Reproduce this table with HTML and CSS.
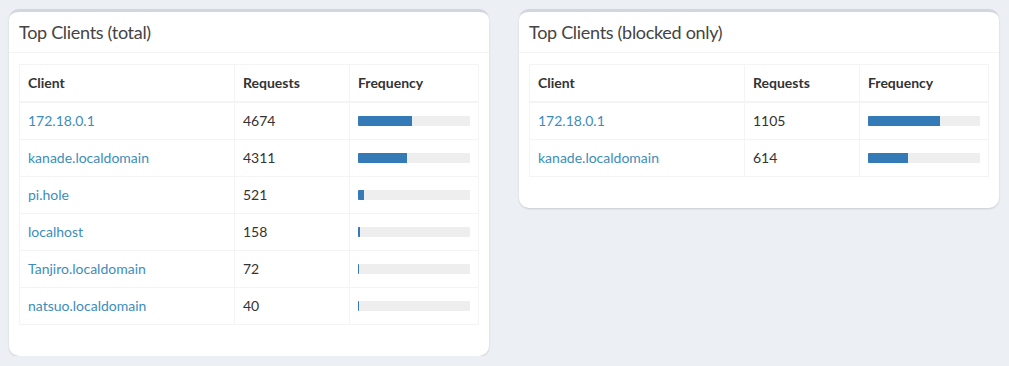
FILE: index.html
```html
<!DOCTYPE html>
<html>
<head>
<meta charset="utf-8">
<link rel="stylesheet" href="styles.css">
</head>
<body>
<div class="row">
  <div class="box">
    <div class="box-header"><h3 class="box-title">Top Clients (total)</h3></div>
    <div class="box-body">
      <table class="tbl">
        <thead><tr><th class="c1">Client</th><th class="c2">Requests</th><th class="c3">Frequency</th></tr></thead>
        <tbody>
          <tr><td><a href="#">172.18.0.1</a></td><td>4674</td><td><div class="bar"><div class="fill" style="width:47.8%"></div></div></td></tr>
          <tr><td><a href="#">kanade.localdomain</a></td><td>4311</td><td><div class="bar"><div class="fill" style="width:44.1%"></div></div></td></tr>
          <tr><td><a href="#">pi.hole</a></td><td>521</td><td><div class="bar"><div class="fill" style="width:5.3%"></div></div></td></tr>
          <tr><td><a href="#">localhost</a></td><td>158</td><td><div class="bar"><div class="fill" style="width:1.6%"></div></div></td></tr>
          <tr><td><a href="#">Tanjiro.localdomain</a></td><td>72</td><td><div class="bar"><div class="fill" style="width:0.74%"></div></div></td></tr>
          <tr><td><a href="#">natsuo.localdomain</a></td><td>40</td><td><div class="bar"><div class="fill" style="width:0.41%"></div></div></td></tr>
        </tbody>
      </table>
    </div>
  </div>
  <div class="box">
    <div class="box-header"><h3 class="box-title">Top Clients (blocked only)</h3></div>
    <div class="box-body">
      <table class="tbl">
        <thead><tr><th class="c1">Client</th><th class="c2">Requests</th><th class="c3">Frequency</th></tr></thead>
        <tbody>
          <tr><td><a href="#">172.18.0.1</a></td><td>1105</td><td><div class="bar"><div class="fill" style="width:64.3%"></div></div></td></tr>
          <tr><td><a href="#">kanade.localdomain</a></td><td>614</td><td><div class="bar"><div class="fill" style="width:35.7%"></div></div></td></tr>
        </tbody>
      </table>
    </div>
  </div>
</div>
</body>
</html>
```
FILE: styles.css
```css
html, body {
  margin: 0;
  padding: 0;
  background: #ecf0f5;
  font-family: "Lato", "Noto Sans", sans-serif;
  font-size: 14px;
  color: #333;
}
.row {
  display: flex;
  align-items: flex-start;
  gap: 30px;
  padding: 9px 0 0 9px;
}
.box {
  width: 480px;
  background: #fff;
  border-top: 3px solid #d2d6de;
  border-radius: 10px;
  box-shadow: 0 1px 2px rgba(0,0,0,0.15);
}
.box-header {
  padding: 10px;
  border-bottom: 1px solid #f4f4f4;
}
.box-title {
  margin: 0;
  font-size: 18px;
  line-height: 20px;
  font-weight: 400;
  color: #444;
  letter-spacing: -0.3px;
}
.box-body {
  padding: 11px 10px 11px;
}
.tbl {
  width: 100%;
  border-collapse: collapse;
  border: 1px solid #f4f4f4;
  margin-bottom: 20px;
}
.tbl th, .tbl td {
  border: 1px solid #f4f4f4;
  padding: 8px;
  line-height: 20px;
  text-align: left;
  vertical-align: middle;
}
.tbl thead th {
  border-bottom-width: 2px;
  font-weight: 700;
}
.c1 { width: 198px; }
.c2 { width: 98px; }
a {
  color: #3c8dbc;
  text-decoration: none;
}
.bar {
  height: 10px;
  background: #eee;
  border-radius: 1px;
  overflow: hidden;
}
.fill {
  height: 100%;
  background: #337ab7;
}
```
